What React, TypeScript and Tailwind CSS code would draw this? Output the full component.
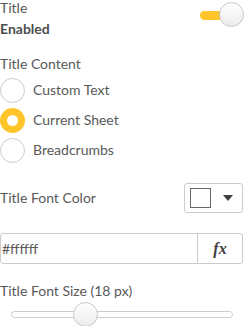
import React from "react";

const font = { fontFamily: "Lato, 'Open Sans', sans-serif" };

function Radio({ label, checked }: { label: string; checked?: boolean }) {
  return (
    <div className="flex items-center h-[30px]">
      {checked ? (
        <div className="w-[25px] h-[25px] rounded-full bg-[#ffc52b] flex items-center justify-center">
          <div className="w-[11px] h-[11px] rounded-full bg-white" />
        </div>
      ) : (
        <div className="w-[25px] h-[25px] rounded-full border border-[#cccccc] bg-white" />
      )}
      <span className="ml-[8px] text-[14px] leading-[16px] text-[#595959]">{label}</span>
    </div>
  );
}

export default function App() {
  return (
    <div className="w-[245px] h-[326px] bg-white overflow-hidden" style={font}>
      <div className="w-[243px] flex flex-col">
        <div className="relative h-[40px]">
          <div className="text-[14px] leading-[16px] text-[#595959]">Title</div>
          <div className="mt-[5px] text-[14px] leading-[16px] font-bold text-[#4d4d4d]">Enabled</div>
          <div className="absolute left-[200px] top-[2px] w-[44px] h-[25px]">
            <div className="absolute left-0 top-[9px] w-[30px] h-[9px] rounded-full bg-[#ffc52b]" />
            <div className="absolute left-[19px] top-0 w-[25px] h-[25px] rounded-full border border-[#c8c8c8] bg-gradient-to-b from-white to-[#ececec]" />
          </div>
        </div>
        <div className="mt-[16px] text-[14px] leading-[16px] text-[#595959]">Title Content</div>
        <div className="mt-[3px] flex flex-col">
          <Radio label="Custom Text" />
          <Radio label="Current Sheet" checked />
          <Radio label="Breadcrumbs" />
        </div>
        <div className="mt-[18px] flex items-center justify-between">
          <span className="text-[14px] leading-[16px] text-[#595959]">Title Font Color</span>
          <div className="w-[59px] h-[30px] border border-[#cccccc] rounded-[3px] flex items-center pl-[5px]">
            <div className="w-[21px] h-[20px] border border-[#666666] bg-white" />
            <svg className="ml-[12px]" width="10" height="7" viewBox="0 0 10 7">
              <polygon points="0,0 10,0 5,6" fill="#404040" />
            </svg>
          </div>
        </div>
        <div className="mt-[20px] h-[31px] border border-[#cccccc] rounded-[3px] flex">
          <div className="flex-1 flex items-center pl-[1px] text-[14px] leading-[16px] text-[#595959]">#ffffff</div>
          <div className="w-[45px] border-l border-[#cccccc] flex items-center justify-center">
            <span className="text-[16px] font-bold italic text-[#404040]" style={{ fontFamily: "'Liberation Serif', serif" }}>fx</span>
          </div>
        </div>
        <div className="mt-[19px] text-[14px] leading-[16px] text-[#595959]">Title Font Size (18 px)</div>
        <div className="relative mt-[3px] h-[26px]">
          <div className="absolute left-[11px] top-[9px] w-[222px] h-[7px] rounded-full border border-[#cccccc] bg-white" />
          <div className="absolute left-[73px] top-0 w-[25px] h-[25px] rounded-full border border-[#c8c8c8] bg-gradient-to-b from-white to-[#ececec]" />
        </div>
      </div>
    </div>
  );
}
